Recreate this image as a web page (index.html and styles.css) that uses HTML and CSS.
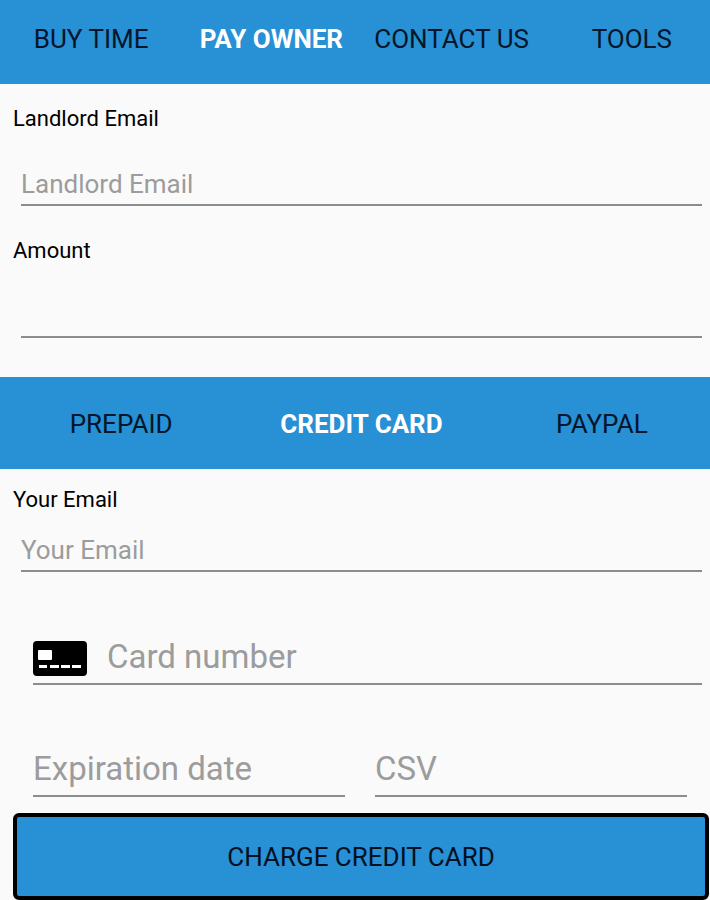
FILE: index.html
```html
<!DOCTYPE html>
<html lang="en">
<head>
<meta charset="utf-8">
<meta name="viewport" content="width=device-width, initial-scale=1">
<title>Pay Owner</title>
<link rel="stylesheet" href="styles.css">
</head>
<body>
<nav class="bar bar-main" aria-label="Main">
  <div class="tabs tabs-four">
    <a class="tab" href="#buy-time">BUY TIME</a>
    <a class="tab active" href="#pay-owner" aria-current="page">PAY OWNER</a>
    <a class="tab" href="#contact">CONTACT US</a>
    <a class="tab" href="#tools">TOOLS</a>
  </div>
</nav>
<form class="payment">
  <section class="fields owner">
    <label class="label" for="landlord">Landlord Email</label>
    <input class="line" id="landlord" type="email" placeholder="Landlord Email">
    <label class="label" for="amount">Amount</label>
    <input class="line" id="amount" type="text" inputmode="decimal">
  </section>
  <div class="bar bar-method">
    <div class="tabs tabs-three">
      <button class="tab" type="button">PREPAID</button>
      <button class="tab active" type="button">CREDIT CARD</button>
      <button class="tab" type="button">PAYPAL</button>
    </div>
  </div>
  <section class="fields payer">
    <label class="label" for="email">Your Email</label>
    <input class="line" id="email" type="email" placeholder="Your Email">
  </section>
  <section class="card">
    <div class="card-field">
      <svg class="card-icon" viewBox="0 0 54 36" aria-hidden="true">
        <rect y="1" width="54" height="35" rx="4" fill="#000"/>
        <rect x="5" y="10" width="14" height="10" rx="1" fill="#fff"/>
        <path d="M6 25h8v3H6zM17 25h9v3h-9zM28 25h9v3h-9zM39 25h9v3h-9z" fill="#fff"/>
      </svg>
      <input class="card-input" type="text" inputmode="numeric" placeholder="Card number" aria-label="Card number">
    </div>
    <div class="card-row">
      <div class="card-field"><input class="card-input" type="text" placeholder="Expiration date" aria-label="Expiration date"></div>
      <div class="card-field"><input class="card-input" type="text" placeholder="CSV" aria-label="CSV"></div>
    </div>
  </section>
  <button class="charge" type="submit">CHARGE CREDIT CARD</button>
</form>
</body>
</html>
```
FILE: styles.css
```css
* {
  box-sizing: border-box;
}

body {
  margin: 0;
  background: #fafafa;
  color: #000;
  font-family: Roboto, "Liberation Sans", sans-serif;
  font-size: 26px;
}

input,
button {
  margin: 0;
  padding: 0;
  border: 0;
  border-radius: 0;
  background: none;
  color: inherit;
  font: inherit;
}

input {
  min-width: 0;
  outline: 0;
}

input::placeholder {
  color: #9c9c9c;
  opacity: 1;
}

.bar {
  overflow: hidden;
  background: #2890d4;
}

.bar-main {
  padding: 24px 0 30px;
}

.bar-method {
  padding: 32px 0 30px;
}

/* The tab strip runs slightly past the right edge of the screen. */
.tabs {
  display: grid;
  margin-right: -12px;
  padding-left: 1px;
}

.tabs-four {
  grid-template-columns: repeat(4, 1fr);
}

.tabs-three {
  grid-template-columns: repeat(3, 1fr);
}

.tab {
  color: #03162a;
  line-height: 30px;
  text-align: center;
  text-decoration: none;
  white-space: nowrap;
}

.tab.active {
  color: #fff;
  font-weight: 700;
}

.fields {
  display: flex;
  flex-direction: column;
  padding-left: 13px;
  padding-right: 8px;
}

.owner {
  gap: 30px;
  padding-top: 20px;
  padding-bottom: 39px;
}

.payer {
  gap: 15px;
  padding-top: 16px;
}

.label {
  font-size: 22px;
  line-height: 30px;
}

.line {
  height: 42px;
  margin-left: 8px;
  border-bottom: 2px solid #8c8c8c;
}

.card {
  display: flex;
  flex-direction: column;
  gap: 59px;
  padding: 60px 8px 16px 33px;
}

.card-field {
  display: flex;
  flex: 1;
  align-items: center;
  gap: 20px;
  min-width: 0;
  border-bottom: 2px solid #8c8c8c;
}

.card-icon {
  flex: none;
  width: 54px;
  height: 36px;
}

.card-input {
  flex: 1;
  height: 51px;
  padding-bottom: 2px;
  font-size: 33px;
}

.card-row {
  display: flex;
  gap: 30px;
  padding-right: 15px;
}

.charge {
  display: block;
  width: calc(100% - 14px);
  height: 87px;
  margin-left: 13px;
  border: 4px solid #000;
  border-radius: 6px;
  background: #2890d4;
  color: #03101f;
}
```
